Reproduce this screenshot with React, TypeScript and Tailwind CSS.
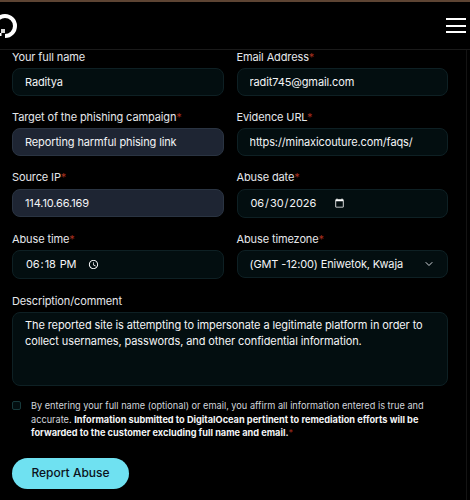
import { ReactNode } from "react";
import { ChevronDown } from "lucide-react";

const inputClass =
  "h-[28px] w-full rounded-lg border border-[#0e2024] bg-[#030e10] px-3 text-[11px] tracking-[-0.12px] text-[#f3f4f6] outline-none";
const filledClass =
  "h-[28px] w-full rounded-lg border border-[#2a3442] bg-[#1e2533] px-3 text-[11px] tracking-[-0.12px] text-[#f3f4f6] outline-none";
const pickerClass =
  "h-[29px] w-full rounded-lg border border-[#0e2024] bg-[#030e10] px-3 text-[11px] tracking-[-0.1px] text-[#f3f4f6] outline-none [&::-webkit-datetime-edit]:flex-none [&::-webkit-calendar-picker-indicator]:h-[11px] [&::-webkit-calendar-picker-indicator]:w-[11px]";

function Field({ label, required, children }: { label: string; required?: boolean; children: ReactNode }) {
  return (
    <div>
      <label className="mb-[4px] block h-[14px] text-[11px] leading-[14px] tracking-[-0.12px] text-[#e5e7eb]">
        {label}
        {required && <span className="text-[#a52f1f]">*</span>}
      </label>
      {children}
    </div>
  );
}

export default function App() {
  return (
    <div className="relative h-[500px] w-[470px] overflow-hidden bg-black font-['Inter',sans-serif] [color-scheme:dark]">
      <div className="h-[2px] bg-[#5d4433]" />
      <header className="flex h-[48px] items-center justify-between border-b border-[#1a1a1a] pr-[4px]">
        <svg width="18" height="26" viewBox="0 0 18 26" fill="none">
          <path d="M-5 13A10 10 0 1 1 5 23" stroke="white" strokeWidth="4" />
          <rect x="1" y="16" width="4" height="4" fill="#d8d8d8" />
          <rect x="0" y="20" width="1.5" height="3" fill="white" />
        </svg>
        <div className="flex w-[20px] flex-col gap-[4.5px]">
          <span className="h-[2px] bg-white" />
          <span className="h-[2px] bg-white" />
          <span className="h-[2px] bg-white" />
        </div>
      </header>

      <form className="pl-3 pr-[22px]">
        <div className="grid grid-cols-2 gap-x-[13px] gap-y-[14px]">
          <Field label="Your full name">
            <input className={inputClass} defaultValue="Raditya" />
          </Field>
          <Field label="Email Address" required>
            <input className={inputClass} defaultValue="radit745@gmail.com" />
          </Field>
          <Field label="Target of the phishing campaign" required>
            <input className={filledClass} defaultValue="Reporting harmful phising link" />
          </Field>
          <Field label="Evidence URL" required>
            <input className={inputClass} defaultValue="https://minaxicouture.com/faqs/" />
          </Field>
          <Field label="Source IP" required>
            <input className={`${filledClass} mt-[1px]`} defaultValue="114.10.66.169" />
          </Field>
          <Field label="Abuse date" required>
            <input
              type="date"
              className={`${pickerClass} mt-[1px] [&::-webkit-calendar-picker-indicator]:ml-[-4px]`}
              defaultValue="2026-06-30"
            />
          </Field>
          <Field label="Abuse time" required>
            <input
              type="time"
              className={`${pickerClass} [&::-webkit-calendar-picker-indicator]:ml-[4px]`}
              defaultValue="18:18"
            />
          </Field>
          <Field label="Abuse timezone" required>
            <div className={`${inputClass} flex items-center justify-between !pr-[12px] whitespace-nowrap`}>
              <span>(GMT -12:00) Eniwetok, Kwaja</span>
              <ChevronDown size={12} className="text-[#d1d5db]" />
            </div>
          </Field>
        </div>

        <div className="mt-[15px]">
          <Field label="Description/comment">
            <textarea
              className="block h-[74px] w-full resize-none rounded-lg border border-[#0e2024] bg-[#030e10] px-3 py-1 text-[11px] leading-[16px] tracking-[-0.1px] text-[#f3f4f6] outline-none"
              defaultValue="The reported site is attempting to impersonate a legitimate platform in order to collect usernames, passwords, and other confidential information."
            />
          </Field>
        </div>

        <div className="mt-[13px] flex gap-[10px]">
          <span className="mt-[2px] h-[9px] w-[9px] shrink-0 rounded-[2px] border border-[#17393b] bg-[#030e10]" />
          <p className="text-[9.2px] leading-[13.5px] text-[#d1d5db]">
            By entering your full name (optional) or email, you affirm all information entered is true and accurate.{" "}
            <b className="font-bold text-[#f3f4f6]">
              Information submitted to DigitalOcean pertinent to remediation efforts will be forwarded to the customer excluding full name and email.
            </b>
            <span className="text-[#a52f1f]">*</span>
          </p>
        </div>

        <button type="button" className="mt-[18px] h-[31px] w-[117px] rounded-full bg-[#6fe1f1] text-[12px] font-medium text-[#0b1220]">
          Report Abuse
        </button>
      </form>

      <div className="absolute bottom-0 right-[3px] top-[50px] w-px bg-[#141414]" />
    </div>
  );
}
